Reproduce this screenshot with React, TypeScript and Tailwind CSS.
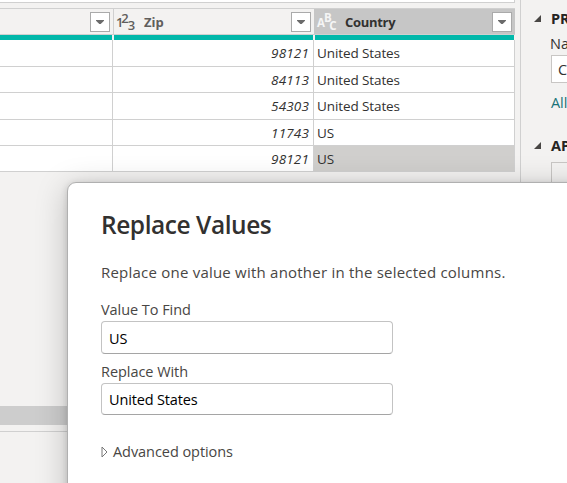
import React from "react";

const rows = [
  { zip: "98121", country: "United States", h: "h-[27px]" },
  { zip: "84113", country: "United States", h: "h-[26px]" },
  { zip: "54303", country: "United States", h: "h-[27px]" },
  { zip: "11743", country: "US", h: "h-[26px]" },
  { zip: "98121", country: "US", h: "h-[26px]", selected: true },
];

function FilterButton() {
  return (
    <div className="flex h-5 w-5 shrink-0 items-center justify-center border border-[#aaaaaa] bg-white">
      <svg width="8" height="4" viewBox="0 0 8 4">
        <path d="M0 0H8V.7L4.7 4H3.3L0 .7Z" fill="#6b6b6b" />
      </svg>
    </div>
  );
}

function TypeIcon({ chars, className }: { chars: string; className: string }) {
  return (
    <svg width="22" height="20" viewBox="0 0 22 20" className={`shrink-0 overflow-visible ${className}`} fill="currentColor" fontFamily="Open Sans, sans-serif" fontWeight="600">
      {chars === "123" ? (
        <g fontSize="13">
          <text x="-1" y="15">1</text>
          <text x="4.3" y="11">2</text>
          <text x="10.8" y="18.4">3</text>
        </g>
      ) : (
        <g fontSize="11.5" fontWeight="700">
          <text x="0" y="14.6">A</text>
          <text x="7" y="10.4">B</text>
          <text x="12.2" y="18.1">C</text>
        </g>
      )}
    </svg>
  );
}

function Collapse() {
  return (
    <svg width="7" height="7" viewBox="0 0 7 7" className="shrink-0">
      <path d="M7 0V7H0Z" fill="#484644" />
    </svg>
  );
}

function Table() {
  return (
    <div className="w-[515px] shrink-0">
      <div className="h-[3px] border-r border-b border-[#d0d0d0] bg-white" />
      <div className="h-[5px]" />
      <div className="flex h-[27px] border-t border-b border-[#d0d0d0] text-[13px] font-semibold">
        <div className="flex w-[114px] items-center justify-end border-r border-[#d0d0d0] pr-[3px]">
          <FilterButton />
        </div>
        <div className="flex w-[200px] items-center pr-[3px] pl-[3px]">
          <TypeIcon chars="123" className="text-[#605e5c]" />
          <span className="mt-[2px] ml-[5px] flex-1 font-bold text-[#605e5c]">Zip</span>
          <FilterButton />
        </div>
        <div className="flex w-[201px] items-center bg-[#c6c6c6] pr-[3px] pl-[3px]">
          <TypeIcon chars="ABC" className="text-[#f5f5f5]" />
          <span className="mt-[2px] ml-[6px] flex-1 text-[#323130]">
            <span className="font-bold tracking-[-0.3px]">Country</span>
          </span>
          <FilterButton />
        </div>
      </div>
      <div className="flex h-[5px] gap-[2px] bg-[#f3f2f1] pr-px">
        <div className="w-[112px] bg-[#01b8aa]" />
        <div className="w-[199px] bg-[#01b8aa]" />
        <div className="flex-1 bg-[#01b8aa]" />
      </div>
      {rows.map((r, i) => (
        <div key={i} className={`flex bg-white text-[13.5px] text-[#323130] ${r.h}`}>
          <div className="w-[113px] border-r border-b border-[#d0d0d0]" />
          <div className="flex w-[201px] items-center justify-end border-r border-b border-[#d0d0d0] pt-px pr-1 tracking-[0.15px] italic">
            {r.zip}
          </div>
          <div className={`flex w-[201px] items-center border-r border-b border-[#d0d0d0] pt-px pl-[3px] ${r.selected ? "bg-[#d0cfcd]" : ""}`}>
            <span className="tracking-[-0.1px]">{r.country}</span>
          </div>
        </div>
      ))}
      <div className="h-[234px]" />
      <div className="h-[19px] bg-[#cdcdcd]" />
      <div className="h-[6px]" />
      <div className="h-px bg-[#d0d0d0]" />
    </div>
  );
}

function SidePane() {
  return (
    <div className="ml-[5px] h-[483px] w-[47px] shrink-0 overflow-hidden border-l border-[#d0d0d0] pl-[13px] whitespace-nowrap">
      <div className="flex h-[36px] items-center gap-[10px] text-[14.5px] font-bold text-[#252423]">
        <Collapse />
        <span className="mt-px">PROPERTIES</span>
      </div>
      <div className="ml-[17px]">
        <div className="-ml-px h-[19px] text-[14.5px] leading-[16px] text-[#323130]">Name</div>
        <div className="flex h-[28px] w-[120px] items-center border border-[#c8c6c4] bg-white pt-px pl-[6px] text-[14.5px] text-[#323130]">
          Customers
        </div>
        <div className="mt-[9px] h-[22px] text-[14.5px] leading-[22px] tracking-[-0.1px] text-[#197278]">All Properties</div>
      </div>
      <div className="mt-[20px] flex h-[22px] items-center gap-[10px] text-[14.5px] font-bold text-[#252423]">
        <Collapse />
        <span className="mt-px">APPLIED STEPS</span>
      </div>
      <div className="mt-[6px] ml-[17px] h-[100px] w-[120px] border border-[#c8c6c4]" />
    </div>
  );
}

function Field({ label, value, h }: { label: string; value: string; h: string }) {
  return (
    <>
      <div className="flex h-[24px] items-center pt-px text-[14.5px] tracking-[-0.05px]">
        <span>{label}</span>
      </div>
      <div className={`flex w-[292px] items-center rounded-[4px] border border-[#c3c3c3] border-b-[#a5a5a5] bg-white pt-[2px] pl-[7px] text-[14.5px] tracking-[-0.15px] text-black ${h}`}>
        <span>{value}</span>
      </div>
    </>
  );
}

export default function App() {
  return (
    <div className="relative h-[483px] w-[567px] overflow-hidden bg-[#f3f2f1] font-['Open_Sans',sans-serif]">
      <div className="flex">
        <Table />
        <SidePane />
      </div>
      <div className="absolute top-[182px] left-[67px] h-[420px] w-[620px] rounded-[9px] border border-[#b0b0b0] bg-white pl-[33px] text-[#484644] shadow-[0_6px_32px_rgba(0,0,0,0.22),0_1px_7px_rgba(0,0,0,0.14)]">
        <h1 className="mt-[25px] h-[34px] text-[24.5px] leading-[34px] font-semibold tracking-[-0.45px] text-[#323130]">
          <span>Replace Values</span>
        </h1>
        <p className="mt-[19px] h-[22px] text-[15px] leading-[22px] tracking-[0.22px]">
          <span>Replace one value with another in the selected columns.</span>
        </p>
        <div className="mt-[14px]">
          <Field label="Value To Find" value="US" h="h-[33px]" />
          <div className="h-[5px]" />
          <Field label="Replace With" value="United States" h="h-[32px]" />
        </div>
        <div className="mt-[26px] flex h-[22px] items-center gap-[5px] text-[14.5px] tracking-[-0.06px]">
          <svg width="7" height="12" viewBox="0 0 7 12">
            <path d="M1 1V11L6 6Z" fill="white" stroke="#777" strokeWidth="1" />
          </svg>
          <span>Advanced options</span>
        </div>
      </div>
    </div>
  );
}
